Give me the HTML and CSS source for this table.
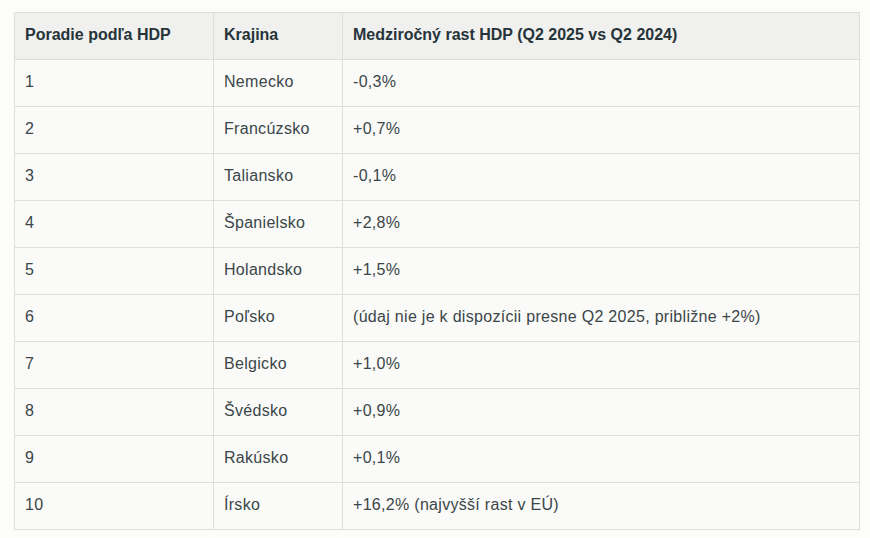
FILE: index.html
```html
<!DOCTYPE html>
<html lang="sk">
<head>
<meta charset="utf-8">
<link rel="stylesheet" href="styles.css">
</head>
<body>
<div class="wrap">
<table class="gdp">
<colgroup><col class="c1"><col class="c2"><col class="c3"></colgroup>
<thead>
<tr><th>Poradie podľa HDP</th><th>Krajina</th><th>Medziročný rast HDP (Q2 2025 vs Q2 2024)</th></tr>
</thead>
<tbody>
<tr><td>1</td><td>Nemecko</td><td>-0,3%</td></tr>
<tr><td>2</td><td>Francúzsko</td><td>+0,7%</td></tr>
<tr><td>3</td><td>Taliansko</td><td>-0,1%</td></tr>
<tr><td>4</td><td>Španielsko</td><td>+2,8%</td></tr>
<tr><td>5</td><td>Holandsko</td><td>+1,5%</td></tr>
<tr><td>6</td><td>Poľsko</td><td>(údaj nie je k dispozícii presne Q2 2025, približne +2%)</td></tr>
<tr><td>7</td><td>Belgicko</td><td>+1,0%</td></tr>
<tr><td>8</td><td>Švédsko</td><td>+0,9%</td></tr>
<tr><td>9</td><td>Rakúsko</td><td>+0,1%</td></tr>
<tr><td>10</td><td>Írsko</td><td>+16,2% (najvyšší rast v EÚ)</td></tr>
</tbody>
</table>
</div>
</body>
</html>
```
FILE: styles.css
```css
html, body {
  margin: 0;
  padding: 0;
  background: #fcfcfb;
}
body {
  font-family: "Liberation Sans", Arial, sans-serif;
  color: #3a4648;
}
.wrap {
  padding: 12px 0 0 14px;
}
.gdp {
  border-collapse: collapse;
  table-layout: fixed;
  width: 845px;
  font-size: 16px;
  letter-spacing: 0.3px;
}
.c1 { width: 199px; }
.c2 { width: 129px; }
.c3 { width: 517px; }
.gdp th, .gdp td {
  border: 1px solid #dddddb;
  padding: 0 10px 3px 10px;
  height: 43px;
  text-align: left;
  vertical-align: middle;
  white-space: nowrap;
}
.gdp th {
  background: #f0f0ee;
  font-weight: bold;
  letter-spacing: 0;
  color: #26343a;
}
.gdp td {
  background: #fafaf8;
}
```
